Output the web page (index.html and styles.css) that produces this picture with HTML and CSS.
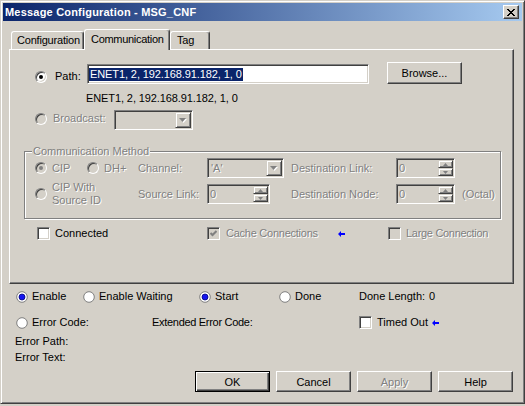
FILE: index.html
```html
<!DOCTYPE html>
<html>
<head>
<meta charset="utf-8">
<link rel="stylesheet" href="styles.css">
</head>
<body>
<div class="window">
  <div class="titlebar">
    <span class="title">Message Configuration - MSG_CNF</span>
    <span class="close">
      <svg width="8" height="7" viewBox="0 0 8 7" shape-rendering="crispEdges">
        <rect x="0" y="0" width="2" height="1"/><rect x="6" y="0" width="2" height="1"/>
        <rect x="1" y="1" width="2" height="1"/><rect x="5" y="1" width="2" height="1"/>
        <rect x="2" y="2" width="4" height="1"/>
        <rect x="3" y="3" width="2" height="1"/>
        <rect x="2" y="4" width="4" height="1"/>
        <rect x="1" y="5" width="2" height="1"/><rect x="5" y="5" width="2" height="1"/>
        <rect x="0" y="6" width="2" height="1"/><rect x="6" y="6" width="2" height="1"/>
      </svg>
    </span>
  </div>
  <div class="client">
    <div class="tabs">
      <div class="tab tab-config">Configuration</div>
      <div class="tab tab-comm">Communication</div>
      <div class="tab tab-tag">Tag</div>
    </div>
    <div class="panel">
      <div class="path-row">
        <span class="radio checked"></span>
        <span class="path-label">Path:</span>
        <div class="sunken path-edit"><span class="selected">ENET1, 2, 192.168.91.182, 1, 0</span></div>
        <div class="btn browse">Browse...</div>
      </div>
      <div class="path-echo">ENET1, 2, 192.168.91.182, 1, 0</div>
      <div class="broadcast-row">
        <span class="radio disabled"></span>
        <span class="dis broadcast-label">Broadcast:</span>
        <div class="sunken combo broadcast-combo">
          <span class="combo-text"></span>
          <span class="drop"><svg width="8" height="5" viewBox="0 0 8 5"><polygon points="1,1 8,1 4.5,5" fill="#fff"/><polygon points="0,0 7,0 3.5,4" fill="#808080"/></svg></span>
        </div>
      </div>
      <fieldset class="group">
        <legend class="dis">Communication Method</legend>
        <div class="method-grid">
          <div class="ritem"><span class="radio disabled checked"></span><span class="dis">CIP</span></div>
          <div class="ritem"><span class="radio disabled"></span><span class="dis">DH+</span></div>
          <div class="dis">Channel:</div>
          <div class="sunken combo channel-combo">
            <span class="combo-text dis">'A'</span>
            <span class="drop"><svg width="8" height="5" viewBox="0 0 8 5"><polygon points="1,1 8,1 4.5,5" fill="#fff"/><polygon points="0,0 7,0 3.5,4" fill="#808080"/></svg></span>
          </div>
          <div class="dis">Destination Link:</div>
          <div class="sunken spin">
            <span class="spin-text dis">0</span>
            <span class="updown">
              <span class="ud"><svg width="5" height="3" viewBox="0 0 5 3"><polygon points="2.5,0 5,3 0,3" fill="#808080"/></svg></span>
              <span class="ud"><svg width="5" height="3" viewBox="0 0 5 3"><polygon points="0,0 5,0 2.5,3" fill="#808080"/></svg></span>
            </span>
          </div>
          <div></div>

          <div class="ritem span2"><span class="radio disabled"></span><span class="dis two-line">CIP With<br>Source ID</span></div>
          <div class="dis">Source Link:</div>
          <div class="sunken spin spin-src">
            <span class="spin-text dis">0</span>
            <span class="updown">
              <span class="ud"><svg width="5" height="3" viewBox="0 0 5 3"><polygon points="2.5,0 5,3 0,3" fill="#808080"/></svg></span>
              <span class="ud"><svg width="5" height="3" viewBox="0 0 5 3"><polygon points="0,0 5,0 2.5,3" fill="#808080"/></svg></span>
            </span>
          </div>
          <div class="dis">Destination Node:</div>
          <div class="sunken spin">
            <span class="spin-text dis">0</span>
            <span class="updown">
              <span class="ud"><svg width="5" height="3" viewBox="0 0 5 3"><polygon points="2.5,0 5,3 0,3" fill="#808080"/></svg></span>
              <span class="ud"><svg width="5" height="3" viewBox="0 0 5 3"><polygon points="0,0 5,0 2.5,3" fill="#808080"/></svg></span>
            </span>
          </div>
          <div class="dis octal">(Octal)</div>
        </div>
      </fieldset>
      <div class="check-row">
        <div class="citem"><span class="cb"></span><span>Connected</span></div>
        <div class="citem"><span class="cb disabled"><svg width="7" height="7" viewBox="0 0 7 7"><path d="M0.5 3 L2.5 5 L6.5 1" stroke="#808080" stroke-width="2" fill="none"/></svg></span><span class="dis cache-label">Cache Connections</span><span class="arrow"><svg width="7" height="6" viewBox="0 0 7 6"><polygon points="0,3 3,0 3,2 7,2 7,4 3,4 3,6" fill="#0000ff"/></svg></span></div>
        <div class="citem"><span class="cb disabled"></span><span class="dis narrow">Large Connection</span></div>
      </div>
    </div>

    <div class="status-row">
      <div class="sitem"><svg class="sradio" width="12" height="12" viewBox="0 0 12 12"><circle cx="6" cy="6" r="5.3" fill="#fff" stroke="#7f7f7f"/><circle cx="6" cy="6" r="3" fill="#1414f0" stroke="#00007a" stroke-width="0.8"/></svg><span>Enable</span></div>
      <div class="sitem"><svg class="sradio" width="12" height="12" viewBox="0 0 12 12"><circle cx="6" cy="6" r="5.3" fill="#fff" stroke="#7f7f7f"/></svg><span>Enable Waiting</span></div>
      <div class="sitem"><svg class="sradio" width="12" height="12" viewBox="0 0 12 12"><circle cx="6" cy="6" r="5.3" fill="#fff" stroke="#7f7f7f"/><circle cx="6" cy="6" r="3" fill="#1414f0" stroke="#00007a" stroke-width="0.8"/></svg><span>Start</span></div>
      <div class="sitem"><svg class="sradio" width="12" height="12" viewBox="0 0 12 12"><circle cx="6" cy="6" r="5.3" fill="#fff" stroke="#7f7f7f"/></svg><span>Done</span></div>
      <div class="sitem"><span>Done Length:</span><span class="dl-val">0</span></div>
    </div>
    <div class="status-row2">
      <div class="sitem"><svg class="sradio" width="12" height="12" viewBox="0 0 12 12"><circle cx="6" cy="6" r="5.3" fill="#fff" stroke="#7f7f7f"/></svg><span>Error Code:</span></div>
      <div class="sitem narrow">Extended Error Code:</div>
      <div class="sitem"><span class="cb"></span><span>Timed Out</span><span class="arrow-small"><svg width="7" height="6" viewBox="0 0 7 6"><polygon points="0,3 3,0 3,2 7,2 7,4 3,4 3,6" fill="#0000ff"/></svg></span></div>
    </div>
    <div class="err err-first">Error Path:</div>
    <div class="err">Error Text:</div>
    <div class="buttons">
      <div class="btn default">OK</div>
      <div class="btn">Cancel</div>
      <div class="btn"><span class="dis">Apply</span></div>
      <div class="btn">Help</div>
    </div>
  </div>
</div>
</body>
</html>
```

FILE: styles.css
```css
* { box-sizing: border-box; }

body {
  margin: 0;
  background: #d4d0c8;
  font-family: "Liberation Sans", Arial, sans-serif;
  font-size: 11px;
  color: #000;
}

.window {
  width: 525px;
  height: 404px;
  border: 1px solid;
  border-color: #d4d0c8 #404040 #404040 #d4d0c8;
  box-shadow: inset 1px 1px #fff, inset -1px -1px #808080;
  padding: 2px;
  background: #d4d0c8;
}

.titlebar {
  height: 18px;
  display: flex;
  align-items: center;
  justify-content: space-between;
  padding: 0 3px 0 2px;
  background: linear-gradient(to right, #0a246a, #a6caf0);
}

.title {
  color: #fff;
  font-weight: bold;
  font-size: 11px;
  letter-spacing: 0.2px;
  white-space: nowrap;
}

.close {
  width: 16px;
  height: 14px;
  display: flex;
  align-items: center;
  justify-content: center;
  background: #d4d0c8;
  border: 1px solid;
  border-color: #fff #404040 #404040 #fff;
  box-shadow: inset -1px -1px #808080;
}

.close svg { display: block; fill: #000; }

.client { padding-left: 6px; }

.narrow { letter-spacing: -0.3px; }

/* tabs */
.tabs {
  display: flex;
  align-items: flex-end;
  height: 21px;
  margin: 8px 0 -1px 2px;
}

.tab {
  height: 18px;
  margin-bottom: 1px;
  border-top: 1px solid #fff;
  border-left: 1px solid #fff;
  border-right: 1px solid #404040;
  box-shadow: inset -1px 0 #808080;
  border-radius: 3px 3px 0 0;
  line-height: 16px;
  padding-left: 5px;
  background: #d4d0c8;
  white-space: nowrap;
  letter-spacing: -0.2px;
}

.tab-config { width: 73px; }
.tab-tag { width: 40px; padding-left: 6px; }

.tab-comm {
  width: 86px;
  height: 21px;
  margin-bottom: 0;
  line-height: 18px;
  padding-left: 6px;
  letter-spacing: -0.3px;
  position: relative;
  z-index: 1;
}

.panel {
  width: 505px;
  height: 235px;
  border: 1px solid;
  border-color: #fff #404040 #404040 #fff;
  box-shadow: inset -1px -1px #808080;
}

/* generic controls */
.dis {
  color: #808080;
  text-shadow: 1px 1px 0 #fff;
}

.radio {
  width: 12px;
  height: 12px;
  flex: none;
  border-radius: 50%;
  border: 1px solid;
  border-color: #808080 #fff #fff #808080;
  box-shadow: inset 1px 1px #404040, inset -1px -1px #d4d0c8;
  background: #fff;
  display: flex;
  align-items: center;
  justify-content: center;
}

.radio.checked::after {
  content: "";
  width: 4px;
  height: 4px;
  border-radius: 50%;
  background: #000;
}

.radio.disabled { background: #d4d0c8; }
.radio.disabled.checked::after { background: #808080; }

.sunken {
  border: 1px solid;
  border-color: #808080 #fff #fff #808080;
  box-shadow: inset 1px 1px #404040, inset -1px -1px #d4d0c8;
}

.btn {
  width: 75px;
  height: 21px;
  display: flex;
  align-items: center;
  justify-content: center;
  background: #d4d0c8;
  border: 1px solid;
  border-color: #fff #404040 #404040 #fff;
  box-shadow: inset -1px -1px #808080;
  white-space: nowrap;
}

.btn.default {
  border-color: #000;
  box-shadow: inset 1px 1px #fff, inset -1px -1px #404040, inset -2px -2px #808080;
}

/* path row */
.path-row {
  display: flex;
  align-items: flex-start;
  height: 22px;
  margin: 12px 0 0 25px;
}

.path-row .radio { margin-top: 9px; }

.path-label {
  margin: 8px 0 0 8px;
  width: 32px;
  line-height: 13px;
}

.path-edit {
  width: 282px;
  height: 20px;
  margin-top: 2px;
  background: #fff;
  display: flex;
  align-items: center;
  padding-left: 1px;
}

.selected {
  background: #0a246a;
  color: #fff;
  line-height: 13px;
  padding: 0 1px;
  white-space: nowrap;
  letter-spacing: -0.1px;
}

.browse {
  height: 22px;
  margin-left: 18px;
}

.path-echo {
  margin: 8px 0 0 76px;
  line-height: 13px;
  letter-spacing: -0.1px;
}

/* broadcast */
.broadcast-row {
  display: flex;
  align-items: flex-start;
  height: 20px;
  margin: 5px 0 0 25px;
}

.broadcast-row .radio { margin-top: 3px; }

.broadcast-label {
  width: 61px;
  margin: 2px 0 0 6px;
  line-height: 13px;
}

.combo {
  display: flex;
  justify-content: space-between;
  align-items: center;
  height: 20px;
  background: #d4d0c8;
  padding: 1px;
}

.broadcast-combo { width: 79px; }
.channel-combo { width: 77px; }

.combo-text { padding-left: 2px; line-height: 13px; }

.drop {
  width: 16px;
  height: 16px;
  flex: none;
  display: flex;
  align-items: center;
  justify-content: center;
  background: #d4d0c8;
  border: 1px solid;
  border-color: #d4d0c8 #404040 #404040 #d4d0c8;
  box-shadow: inset 1px 1px #fff, inset -1px -1px #808080;
}

.drop svg, .ud svg { display: block; }

/* group */
.group {
  margin: 15px 0 0 14px;
  width: 477px;
  padding: 0 0 14px 10px;
  border: 1px solid #808080;
  box-shadow: inset 1px 1px #fff, 1px 1px #fff;
  min-width: 0;
}

.group legend {
  padding: 0 1px;
  margin-left: -3px;
  line-height: 13px;
  background: #d4d0c8;
}

.method-grid {
  display: grid;
  grid-template-columns: 52px 51px 69px 84px 105px 59px auto;
  grid-template-rows: 20px 20px;
  row-gap: 6px;
  align-items: center;
  line-height: 13px;
}

.ritem {
  display: flex;
  align-items: center;
  gap: 5px;
}

.span2 { grid-column: span 2; }

.two-line { line-height: 13px; }

.spin {
  width: 59px;
  height: 20px;
  display: flex;
  justify-content: space-between;
  align-items: stretch;
  padding: 1px;
  background: #d4d0c8;
}

.spin-src { width: 63px; }

.spin-text {
  padding-left: 1px;
  display: flex;
  align-items: center;
}

.updown {
  width: 15px;
  display: flex;
  flex-direction: column;
}

.ud {
  height: 8px;
  display: flex;
  align-items: center;
  justify-content: center;
  background: #d4d0c8;
  border: 1px solid;
  border-color: #d4d0c8 #404040 #404040 #d4d0c8;
  box-shadow: inset 1px 1px #fff, inset -1px -1px #808080;
}

.octal { margin-left: 7px; }

/* checkboxes */
.check-row {
  display: grid;
  grid-template-columns: 170px 181px auto;
  margin: 8px 0 0 27px;
  align-items: center;
  line-height: 13px;
}

.citem {
  display: flex;
  align-items: center;
  white-space: nowrap;
}

.cb {
  width: 13px;
  height: 13px;
  flex: none;
  margin-right: 5px;
  display: flex;
  align-items: center;
  justify-content: center;
  background: #fff;
  border: 1px solid;
  border-color: #808080 #fff #fff #808080;
  box-shadow: inset 1px 1px #404040, inset -1px -1px #d4d0c8;
}

.cb.disabled { background: #d4d0c8; }
.cb svg { display: block; }

.cache-label { margin-left: 1px; letter-spacing: -0.25px; }

.arrow { margin-left: 20px; display: flex; }
.arrow svg, .arrow-small svg { display: block; }
.arrow-small { margin-left: 4px; display: flex; }

/* status area */
.status-row {
  display: grid;
  grid-template-columns: 67px 116px 80px 80px auto;
  margin: 6px 0 0 7px;
  line-height: 13px;
  align-items: center;
}

.status-row2 {
  display: grid;
  grid-template-columns: 136px 207px auto;
  margin: 13px 0 0 7px;
  line-height: 13px;
  align-items: center;
}

.sitem {
  display: flex;
  align-items: center;
  white-space: nowrap;
}

.sradio { display: block; flex: none; margin-right: 4px; }

.dl-val { margin-left: 4px; }

.err {
  margin-left: 6px;
  line-height: 16px;
}

.err-first { margin-top: 4px; }

.buttons {
  display: flex;
  justify-content: flex-end;
  gap: 6px;
  width: 505px;
  padding-right: 1px;
  margin-top: 6px;
}
```
